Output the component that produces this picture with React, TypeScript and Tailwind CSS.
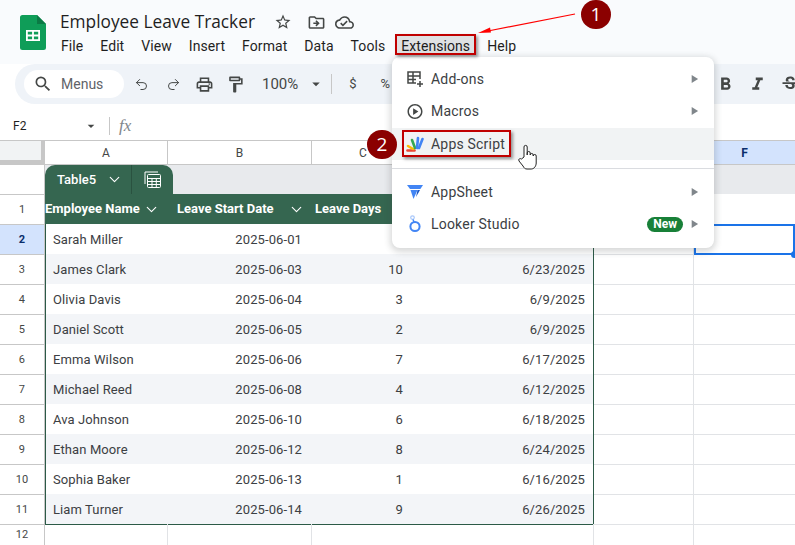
import { MdSearch, MdOutlineLocalPrintshop, MdOutlineFormatPaint, MdOutlineStarBorder, MdOutlineDriveFileMove, MdOutlineCloudDone, MdArrowDropDown, MdFormatBold, MdFormatItalic, MdStrikethroughS, MdOutlinePlayCircle, MdPlayArrow } from "react-icons/md";
import { Undo2, Redo2, ChevronDown } from "lucide-react";

const rows = [
  ["Sarah Miller", "2025-06-01", "", ""],
  ["James Clark", "2025-06-03", "10", "6/23/2025"],
  ["Olivia Davis", "2025-06-04", "3", "6/9/2025"],
  ["Daniel Scott", "2025-06-05", "2", "6/9/2025"],
  ["Emma Wilson", "2025-06-06", "7", "6/17/2025"],
  ["Michael Reed", "2025-06-08", "4", "6/12/2025"],
  ["Ava Johnson", "2025-06-10", "6", "6/18/2025"],
  ["Ethan Moore", "2025-06-12", "8", "6/24/2025"],
  ["Sophia Baker", "2025-06-13", "1", "6/16/2025"],
  ["Liam Turner", "2025-06-14", "9", "6/26/2025"],
];

const menus = ["File", "Edit", "View", "Insert", "Format", "Data", "Tools"];

function SheetsLogo() {
  return (
    <svg width="26" height="35" viewBox="0 0 26 35">
      <path d="M2.5 0H17l9 9v23.5a2.5 2.5 0 0 1-2.5 2.5h-21A2.5 2.5 0 0 1 0 32.5v-30A2.5 2.5 0 0 1 2.5 0z" fill="#0f9d58" />
      <path d="M17 0l9 9h-9z" fill="#0b7a45" />
      <path d="M6 15h14v11H6z M7.8 16.8v2.8h4.3v-2.8z M13.9 16.8v2.8h4.3v-2.8z M7.8 21.4v2.8h4.3v-2.8z M13.9 21.4v2.8h4.3v-2.8z" fill="#fff" fillRule="evenodd" />
    </svg>
  );
}

function AddOnsIcon() {
  return (
    <svg width="18" height="18" viewBox="0 0 18 18" fill="none" stroke="#444746" strokeWidth="1.5">
      <path d="M10 13H2V2h12v7" />
      <path d="M2 6h12M2 9.5h8M7 2v11" />
      <path d="M14 11v6M11 14h6" />
    </svg>
  );
}

function AppsScriptIcon() {
  return (
    <svg width="18" height="16" viewBox="0 0 18 16" fill="none" strokeWidth="2.6" strokeLinecap="round">
      <path d="M1.5 14.5h7" stroke="#ea4335" />
      <path d="M2 10l5 3" stroke="#fbbc04" />
      <path d="M6 4l3 8" stroke="#34a853" />
      <path d="M12 2l-1 10" stroke="#4285f4" />
      <path d="M16.5 3L13 12" stroke="#4285f4" />
    </svg>
  );
}

function AppSheetIcon() {
  return (
    <svg width="16" height="14" viewBox="0 0 16 14">
      <path d="M0 0h16l-2.6 4H3z" fill="#4285f4" />
      <path d="M3.5 5h7L6.5 14z" fill="#4285f4" />
      <path d="M10.5 5h2.5L9 12z" fill="#1a56c4" />
    </svg>
  );
}

function LookerIcon() {
  return (
    <svg width="14" height="18" viewBox="0 0 14 18" fill="none">
      <circle cx="7" cy="11.5" r="4.6" stroke="#4285f4" strokeWidth="2" />
      <circle cx="4.5" cy="2.6" r="1.8" stroke="#a8c7fa" strokeWidth="1.2" />
      <path d="M5 4.5L6 7" stroke="#4285f4" strokeWidth="1.4" />
    </svg>
  );
}

function CalcIcon() {
  return (
    <svg width="17" height="17" viewBox="0 0 17 17" fill="none" stroke="#fff" strokeWidth="1">
      <path d="M1 13V1h13" />
      <rect x="3.5" y="3.5" width="13" height="13" rx="1" />
      <path d="M3.5 7.5h13M3.5 10.5h13M3.5 13.5h13M8 7.5v9M12.3 7.5v9" />
    </svg>
  );
}

function HeadCell({ label, className }: { label: string; className: string }) {
  return (
    <div className={`flex items-center h-full shrink-0 overflow-hidden whitespace-nowrap font-bold text-[13px] text-white ${className}`}>
      {label}
    </div>
  );
}

function MenuItem({ icon, label, active, badge, arrow = true }: { icon: React.ReactNode; label: string; active?: boolean; badge?: boolean; arrow?: boolean }) {
  return (
    <div className={`flex items-center h-[32px] pl-[14px] pr-[13px] ${active ? "bg-[#f1f3f4] mt-px" : ""}`}>
      <div className="w-[18px] flex justify-center">{icon}</div>
      <span className="ml-[7px] text-[14px] text-[#3c4043] tracking-[0.2px]">{label}</span>
      <div className="flex-1" />
      {badge && <span className="mr-[4px] rounded-full bg-[#188038] px-[6px] text-[12px] leading-[15px] font-bold text-white">New</span>}
      {arrow && <MdPlayArrow size={14} className="text-[#80868b]" />}
    </div>
  );
}

export default function App() {
  return (
    <div className="relative w-[795px] h-[545px] overflow-hidden bg-white font-['Roboto',sans-serif] text-[#3c4043]">
      {/* Title bar */}
      <div className="flex h-[64px] bg-[#f9fbfd] pl-[20px] pt-[15px]">
        <SheetsLogo />
        <div className="ml-[14px] -mt-[8px]">
          <div className="flex items-center h-[30px]">
            <span className="font-['Open_Sans',sans-serif] text-[17.3px] text-[#1f1f1f]">Employee Leave Tracker</span>
            <MdOutlineStarBorder size={18} className="ml-[19px] text-[#444746]" />
            <MdOutlineDriveFileMove size={19} className="ml-[15px] text-[#444746]" />
            <MdOutlineCloudDone size={19} className="ml-[9px] text-[#444746]" />
          </div>
          <div className="flex items-center gap-[17px] text-[14px] text-[#1f1f1f] h-[22px] -mt-[2px] ml-px tracking-[0.07px]">
            {menus.map((m) => (
              <span key={m}>{m}</span>
            ))}
            <span className="ml-[-1px]">Extensions</span>
            <span>Help</span>
          </div>
        </div>
      </div>

      {/* Toolbar */}
      <div className="flex items-center h-[40px] ml-[15px] w-[900px] rounded-l-full bg-[#eff3f8] pl-[9px] text-[#444746]">
        <div className="flex items-center h-[28px] w-[100px] rounded-full bg-white pl-[9px]">
          <MdSearch size={20} />
          <span className="ml-[8px] text-[14px] text-[#5f6368]">Menus</span>
        </div>
        <Undo2 size={15} strokeWidth={1.6} className="ml-[10px]" />
        <Redo2 size={15} strokeWidth={1.6} className="ml-[17px]" />
        <MdOutlineLocalPrintshop size={19} className="ml-[14px]" />
        <MdOutlineFormatPaint size={19} className="ml-[12px]" />
        <span className="ml-[17px] text-[15px]">100%</span>
        <MdArrowDropDown size={18} className="ml-[9px]" />
        <div className="ml-[6px] h-[20px] w-px bg-[#c7c7c7]" />
        <span className="ml-[17px] text-[13px]">$</span>
        <span className="ml-[24px] text-[13px]">%</span>
        <div className="w-[325px]" />
        <MdFormatBold size={21} />
        <MdFormatItalic size={21} className="ml-[11px]" />
        <MdStrikethroughS size={20} className="ml-[12px]" />
      </div>

      {/* Formula bar */}
      <div className="flex items-center h-[36px] pt-[8px] pl-[13px] text-[#444746]">
        <span className="w-[70px] text-[12px] text-[#1f1f1f]">F2</span>
        <MdArrowDropDown size={16} />
        <div className="ml-[10px] h-[18px] w-px bg-[#c7c7c7]" />
        <span className="ml-[9px] font-['Liberation_Serif',serif] italic text-[17px] text-[#80868b]">fx</span>
      </div>

      {/* Column headers */}
      <div className="flex h-[25px] border-y border-[#c7c7c7] text-[12px] text-[#444746] leading-[24px]">
        <div className="w-[45px] shrink-0 h-[23px] bg-[#f1f3f4] border-r-[4px] border-b-[4px] border-[#c7c7c7]" />
        <div className="w-[123px] text-center border-r border-[#c7c7c7]">A</div>
        <div className="w-[144px] text-center border-r border-[#c7c7c7]">B</div>
        <div className="w-[282px] border-r border-[#c7c7c7] pl-[47px]">C</div>
        <div className="w-[100px] border-r border-[#c7c7c7]" />
        <div className="flex-1 text-center bg-[#d3e3fd] font-bold text-[#0b2e6b]">F</div>
      </div>

      {/* Table name row */}
      <div className="flex h-[29px]">
        <div className="w-[45px] shrink-0 border-r border-[#c7c7c7]" />
        <div className="flex-1 bg-[#e8eaed]">
          <div className="flex items-stretch h-[29px] w-[128px] rounded-t-[10px] bg-[#356650] text-white">
            <div className="flex items-center w-[87px] pl-[12px] border-r border-[#2a5240] text-[13px] font-medium">
              Table5
              <ChevronDown size={17} strokeWidth={1.6} className="ml-[10px]" />
            </div>
            <div className="flex-1 flex items-center justify-center">
              <CalcIcon />
            </div>
          </div>
        </div>
      </div>

      {/* Row 1: table header */}
      <div className="flex h-[30px] text-[12px]">
        <div className="w-[45px] shrink-0 flex items-center justify-center border-r border-t border-[#c7c7c7] pt-px text-[11px] text-[#444746]">1</div>
        <div className="flex w-[549px] shrink-0 h-[30px] items-center bg-[#356650]">
          <HeadCell label="Employee Name" className="w-[98px]" />
          <ChevronDown size={17} strokeWidth={1.6} className="text-white shrink-0" />
          <div className="w-[17px] shrink-0" />
          <HeadCell label="Leave Start Date" className="w-[101px]" />
          <ChevronDown size={17} strokeWidth={1.6} className="ml-[10px] text-white shrink-0" />
          <div className="w-[10px] shrink-0" />
          <HeadCell label="Leave Days" className="w-[70px]" />
        </div>
        <div className="w-[100px] border-r border-[#e1e3e6]" />
        <div className="flex-1" />
      </div>

      {/* Body rows */}
      {rows.map((r, i) => (
        <div key={r[0]} className="flex h-[30px] text-[13px] tracking-[0.1px]">
          <div className={`w-[45px] shrink-0 flex items-center justify-center border-r border-t border-[#c7c7c7] pt-px text-[11px] ${i === 0 ? "bg-[#d3e3fd] font-bold text-[#0b2e6b]" : "text-[#444746]"}`}>
            {i + 2}
          </div>
          <div className={`flex w-[549px] shrink-0 border-x border-[#2c5a47] pt-px ${i === rows.length - 1 ? "shadow-[0_1px_0_#2c5a47]" : ""} ${i % 2 === 1 ? "bg-[#f3f5f8]" : "bg-white"}`}>
            <div className="w-[121px] pl-[7px] flex items-center">{r[0]}</div>
            <div className="w-[144px] flex items-center justify-end pr-[9px]">{r[1]}</div>
            <div className="w-[92px] flex items-center justify-end">{r[2]}</div>
            <div className="flex-1 flex items-center justify-end pr-[8px]">{r[3]}</div>
          </div>
          <div className="w-[100px] shrink-0 border-r border-t border-[#e1e3e6]" />
          <div className="flex-1 border-t border-[#e1e3e6]" />
        </div>
      ))}

      {/* Row 12 */}
      <div className="flex h-[22px] text-[11px]">
        <div className="w-[45px] shrink-0 flex items-center justify-center border-r border-t border-[#c7c7c7] text-[#444746]">12</div>
        <div className="w-[123px] border-r border-[#e1e3e6]" />
        <div className="w-[144px] border-r border-[#e1e3e6]" />
        <div className="w-[282px] border-r border-[#e1e3e6]" />
        <div className="w-[100px] border-r border-t border-[#e1e3e6]" />
        <div className="flex-1 border-t border-[#e1e3e6]" />
      </div>

      {/* Selected cell F2 */}
      <div className="absolute left-[694px] top-[224px] w-[101px] h-[31px] border-2 border-[#1a73e8]" />
      <div className="absolute left-[791px] top-[251px] w-[7px] h-[7px] rounded-full bg-[#1a73e8]" />

      {/* Extensions menu */}
      <div className="absolute left-[392px] top-[57px] w-[322px] h-[191px] rounded-[8px] bg-white shadow-[0_2px_6px_2px_rgba(60,64,67,0.2)] pt-[6px]">
        <MenuItem icon={<AddOnsIcon />} label="Add-ons" />
        <MenuItem icon={<MdOutlinePlayCircle size={19} className="text-[#444746]" />} label="Macros" />
        <MenuItem icon={<AppsScriptIcon />} label="Apps Script" active arrow={false} />
        <div className="mt-[8px] mb-[7px] h-px bg-[#dadce0]" />
        <MenuItem icon={<AppSheetIcon />} label="AppSheet" />
        <MenuItem icon={<LookerIcon />} label="Looker Studio" badge />
      </div>

      {/* Callouts */}
      <div className="absolute left-[395px] top-[34px] w-[81px] h-[21px] bg-black/10 border-[2px] border-[#c00000] shadow-[2px_2px_3px_rgba(0,0,0,0.4)]" />
      <div className="absolute left-[402px] top-[130px] w-[109px] h-[27px] border-[2px] border-[#c00000] shadow-[2px_2px_3px_rgba(0,0,0,0.4)]" />
      <svg className="absolute left-[470px] top-[5px]" width="120" height="35" viewBox="0 0 120 35">
        <path d="M105 9L18 26" stroke="#ff0000" strokeWidth="1.2" />
        <path d="M8 28l12-5.5 1 5z" fill="#ff0000" />
      </svg>
      <div className="absolute left-[581px] top-0 w-[30px] h-[29px] rounded-full bg-[#8b0000] flex items-center justify-center text-white text-[19px] font-['Open_Sans',sans-serif]">1</div>
      <div className="absolute left-[367px] top-[130px] w-[30px] h-[29px] rounded-full bg-[#8b0000] flex items-center justify-center text-white text-[19px] font-['Open_Sans',sans-serif]">2</div>

      {/* Hand cursor */}
      <svg className="absolute left-[518px] top-[144px]" width="22" height="27" viewBox="0 0 22 27" fill="#fff" stroke="#222" strokeWidth="1">
        <path d="M6 13V3a1.6 1.6 0 0 1 3.2 0v8V9a1.5 1.5 0 0 1 3 0v2a1.5 1.5 0 0 1 3 0v1a1.5 1.5 0 0 1 3 0v7c0 3-2 6-5 6H9c-2 0-3-1-4-3l-4-5c-1-2 1-3 2.5-2z" />
      </svg>
    </div>
  );
}
